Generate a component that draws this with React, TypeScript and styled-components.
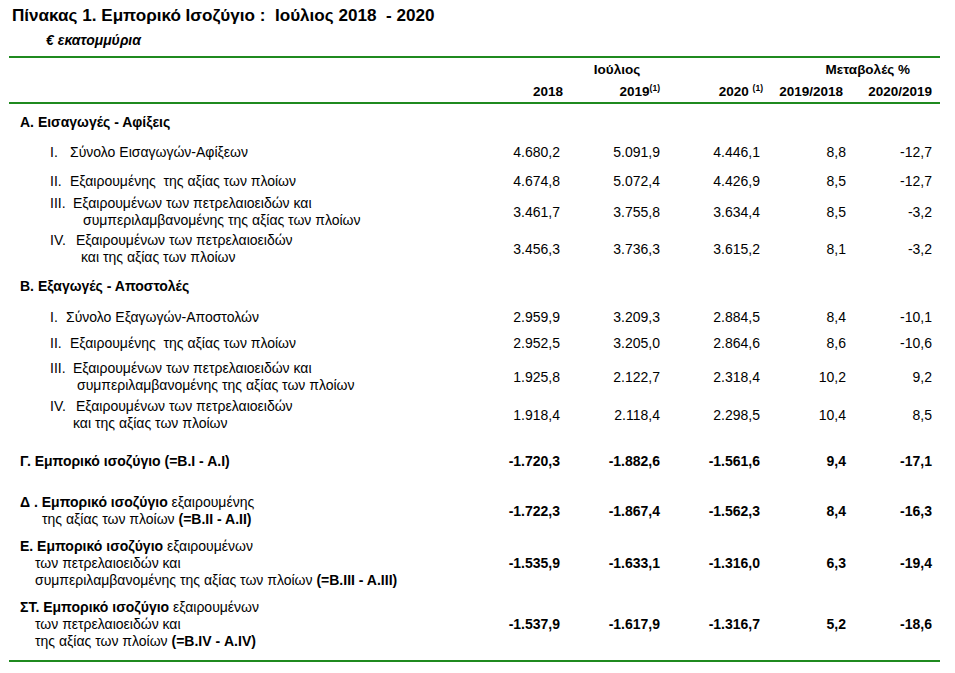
import React from 'react';
import styled, { createGlobalStyle } from 'styled-components';

const GlobalStyle = createGlobalStyle`
  html, body { margin: 0; padding: 0; background: #ffffff; }
  body {
    font-family: "Liberation Sans", Arial, Helvetica, sans-serif;
    color: #000000;
  }
`;

const COLS = '451px 100px 100px 100px 86px 86px';
const GREEN = '#1f8a1f';

const Page = styled.div`
  width: 931px;
  padding: 6px 0 0 9px;
`;

const Title = styled.h1`
  margin: 0 0 0 3px;
  font-size: 17.1px;
  line-height: 20px;
  font-weight: bold;
  white-space: pre;
`;

const Unit = styled.div`
  margin: 6px 0 0 37px;
  font-size: 14px;
  line-height: 16px;
  font-weight: bold;
  font-style: italic;
`;

const Rule = styled.div<{ $top: number }>`
  margin-top: ${(p) => p.$top}px;
  height: 2px;
  background: ${GREEN};
`;

const HeadGrid = styled.div`
  display: grid;
  grid-template-columns: ${COLS};
  grid-template-rows: 16px 16px;
  row-gap: 6px;
  padding: 4px 8px 2px 0;
  font-size: 13.5px;
  line-height: 16px;
  font-weight: bold;
`;

const GroupHead = styled.div<{ $col: string; $pl?: number; $pr?: number; $align: string }>`
  grid-row: 1;
  grid-column: ${(p) => p.$col};
  text-align: ${(p) => p.$align};
  padding-left: ${(p) => p.$pl ?? 0}px;
  padding-right: ${(p) => p.$pr ?? 0}px;
`;

const ColHead = styled.div<{ $col: number; $mr?: number }>`
  grid-row: 2;
  grid-column: ${(p) => p.$col};
  text-align: right;
  white-space: pre;
  margin-right: ${(p) => p.$mr ?? 0}px;
`;

const Sup = styled.sup`
  font-size: 8.5px;
  line-height: 0;
  vertical-align: 5px;
`;

const Body = styled.div`
  display: flex;
  flex-direction: column;
`;

const Row = styled.div<{ $gap: number; $bold?: boolean }>`
  display: grid;
  grid-template-columns: ${COLS};
  align-items: center;
  margin-top: ${(p) => p.$gap}px;
  padding-right: 8px;
  font-size: 14px;
  line-height: 17px;
  font-weight: ${(p) => (p.$bold ? 'bold' : 'normal')};
`;

const Label = styled.div`
  display: flex;
  flex-direction: column;
`;

const Line = styled.div<{ $indent: number }>`
  padding-left: ${(p) => p.$indent}px;
  white-space: pre;
  display: flex;
`;

const Num = styled.span<{ $w: number }>`
  display: inline-block;
  width: ${(p) => p.$w}px;
  flex: none;
`;

const B = styled.span`
  font-weight: bold;
`;

const Value = styled.div<{ $bold?: boolean }>`
  text-align: right;
  white-space: pre;
  font-weight: ${(p) => (p.$bold ? 'bold' : 'inherit')};
`;

type LineDef = { indent: number; num?: string; numW?: number; content: React.ReactNode };
type RowDef = { gap: number; bold?: boolean; boldValues?: boolean; lines: LineDef[]; values?: string[] };

const rows: RowDef[] = [
  { gap: 10, bold: true, lines: [{ indent: 11, content: 'Α. Εισαγωγές - Αφίξεις' }] },
  {
    gap: 13,
    lines: [{ indent: 41, num: 'I.', numW: 20, content: 'Σύνολο Εισαγωγών-Αφίξεων' }],
    values: ['4.680,2', '5.091,9', '4.446,1', '8,8', '-12,7'],
  },
  {
    gap: 12,
    lines: [{ indent: 41, num: 'II.', numW: 20, content: 'Εξαιρουμένης  της αξίας των πλοίων' }],
    values: ['4.674,8', '5.072,4', '4.426,9', '8,5', '-12,7'],
  },
  {
    gap: 5,
    lines: [
      { indent: 41, num: 'III.', numW: 23, content: 'Εξαιρουμένων των πετρελαιοειδών και' },
      { indent: 74, content: 'συμπεριλαμβανομένης της αξίας των πλοίων' },
    ],
    values: ['3.461,7', '3.755,8', '3.634,4', '8,5', '-3,2'],
  },
  {
    gap: 3,
    lines: [
      { indent: 41, num: 'IV.', numW: 26, content: 'Εξαιρουμένων των πετρελαιοειδών' },
      { indent: 72, content: 'και της αξίας των πλοίων' },
    ],
    values: ['3.456,3', '3.736,3', '3.615,2', '8,1', '-3,2'],
  },
  { gap: 12, bold: true, lines: [{ indent: 11, content: 'Β. Εξαγωγές - Αποστολές' }] },
  {
    gap: 14,
    lines: [{ indent: 41, num: 'I.', numW: 16, content: 'Σύνολο Εξαγωγών-Αποστολών' }],
    values: ['2.959,9', '3.209,3', '2.884,5', '8,4', '-10,1'],
  },
  {
    gap: 9,
    lines: [{ indent: 41, num: 'II.', numW: 20, content: 'Εξαιρουμένης  της αξίας των πλοίων' }],
    values: ['2.952,5', '3.205,0', '2.864,6', '8,6', '-10,6'],
  },
  {
    gap: 8,
    lines: [
      { indent: 41, num: 'III.', numW: 23, content: 'Εξαιρουμένων των πετρελαιοειδών και' },
      { indent: 68, content: 'συμπεριλαμβανομένης της αξίας των πλοίων' },
    ],
    values: ['1.925,8', '2.122,7', '2.318,4', '10,2', '9,2'],
  },
  {
    gap: 4,
    lines: [
      { indent: 41, num: 'IV.', numW: 26, content: 'Εξαιρουμένων των πετρελαιοειδών' },
      { indent: 64, content: 'και της αξίας των πλοίων' },
    ],
    values: ['1.918,4', '2.118,4', '2.298,5', '10,4', '8,5'],
  },
  {
    gap: 21,
    bold: true,
    lines: [{ indent: 11, content: 'Γ. Εμπορικό ισοζύγιο (=Β.Ι - Α.Ι)' }],
    values: ['-1.720,3', '-1.882,6', '-1.561,6', '9,4', '-17,1'],
  },
  {
    gap: 24,
    boldValues: true,
    lines: [
      { indent: 11, content: <><B>Δ . Εμπορικό ισοζύγιο</B> εξαιρουμένης</> },
      { indent: 33, content: <>της αξίας των πλοίων <B>(=Β.ΙΙ - Α.ΙΙ)</B></> },
    ],
    values: ['-1.722,3', '-1.867,4', '-1.562,3', '8,4', '-16,3'],
  },
  {
    gap: 10,
    boldValues: true,
    lines: [
      { indent: 11, content: <><B>Ε. Εμπορικό ισοζύγιο</B> εξαιρουμένων</> },
      { indent: 26, content: 'των πετρελαιοειδών και' },
      { indent: 26, content: <>συμπεριλαμβανομένης της αξίας των πλοίων <B>(=Β.ΙΙΙ - Α.ΙΙΙ)</B></> },
    ],
    values: ['-1.535,9', '-1.633,1', '-1.316,0', '6,3', '-19,4'],
  },
  {
    gap: 10,
    boldValues: true,
    lines: [
      { indent: 11, content: <><B>ΣΤ. Εμπορικό ισοζύγιο</B> εξαιρουμένων</> },
      { indent: 26, content: 'των πετρελαιοειδών και' },
      { indent: 26, content: <>της αξίας των πλοίων <B>(=Β.ΙV - Α.ΙV)</B></> },
    ],
    values: ['-1.537,9', '-1.617,9', '-1.316,7', '5,2', '-18,6'],
  },
];

export default function App() {
  return (
    <>
      <GlobalStyle />
      <Page>
        <Title>{'Πίνακας 1. Εμπορικό Ισοζύγιο :  Ιούλιος 2018  - 2020'}</Title>
        <Unit>€ εκατομμύρια</Unit>
        <Rule $top={8} />
        <HeadGrid>
          <GroupHead $col="2 / 5" $align="center" $pl={14}>Ιούλιος</GroupHead>
          <GroupHead $col="5 / 7" $align="right" $pr={22}>Μεταβολές %</GroupHead>
          <ColHead $col={2} $mr={-3}>2018</ColHead>
          <ColHead $col={3}>2019<Sup>(1)</Sup></ColHead>
          <ColHead $col={4} $mr={-3}>{'2020 '}<Sup>(1)</Sup></ColHead>
          <ColHead $col={5} $mr={3}>2019/2018</ColHead>
          <ColHead $col={6}>2020/2019</ColHead>
        </HeadGrid>
        <Rule $top={0} />
        <Body>
          {rows.map((r, i) => (
            <Row key={i} $gap={r.gap} $bold={r.bold}>
              <Label>
                {r.lines.map((l, j) => (
                  <Line key={j} $indent={l.indent}>
                    {l.num && <Num $w={l.numW ?? 20}>{l.num}</Num>}
                    <span>{l.content}</span>
                  </Line>
                ))}
              </Label>
              {(r.values ?? []).map((v, k) => (
                <Value key={k} $bold={r.boldValues}>
                  {v}
                </Value>
              ))}
            </Row>
          ))}
        </Body>
        <Rule $top={10} />
      </Page>
    </>
  );
}
